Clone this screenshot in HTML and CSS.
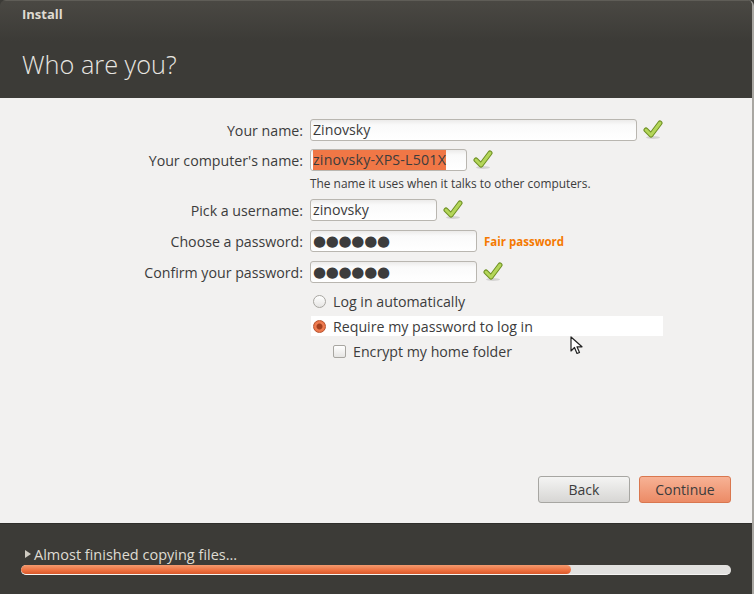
FILE: index.html
```html
<!doctype html>
<html>
<head>
  <meta charset="utf-8">
  <link rel="stylesheet" href="styles.css">
</head>
<body>
<div class="window">
  <div class="header">
    <div class="win_title">Install</div>
    <h1 class="page_title">Who are you?</h1>
  </div>

  <div class="content">
    <div class="row">
      <span class="label">Your name:</span>
      <div class="field_wrap">
        <div class="field w_name">Zinovsky</div>
        <svg class="check" width="20" height="20" viewBox="0 0 20 20"><ellipse cx="10" cy="17.5" rx="7" ry="1.5" fill="rgba(0,0,0,0.12)"/><path d="M3 10 L8 15 L17 3" fill="none" stroke="#6d8f22" stroke-width="5" stroke-linecap="round" stroke-linejoin="round"/><path d="M3 10 L8 15 L17 3" fill="none" stroke="#b4d65a" stroke-width="3" stroke-linecap="round" stroke-linejoin="round"/></svg>
      </div>
    </div>

    <div class="row row_tight">
      <span class="label">Your computer's name:</span>
      <div class="field_wrap">
        <div class="field w_host"><span class="selected">zinovsky-XPS-L501X</span></div>
        <svg class="check" width="20" height="20" viewBox="0 0 20 20"><ellipse cx="10" cy="17.5" rx="7" ry="1.5" fill="rgba(0,0,0,0.12)"/><path d="M3 10 L8 15 L17 3" fill="none" stroke="#6d8f22" stroke-width="5" stroke-linecap="round" stroke-linejoin="round"/><path d="M3 10 L8 15 L17 3" fill="none" stroke="#b4d65a" stroke-width="3" stroke-linecap="round" stroke-linejoin="round"/></svg>
      </div>
    </div>
    <div class="row hint_row">
      <span></span>
      <span class="hint">The name it uses when it talks to other computers.</span>
    </div>

    <div class="row">
      <span class="label">Pick a username:</span>
      <div class="field_wrap">
        <div class="field w_user">zinovsky</div>
        <svg class="check" width="20" height="20" viewBox="0 0 20 20"><ellipse cx="10" cy="17.5" rx="7" ry="1.5" fill="rgba(0,0,0,0.12)"/><path d="M3 10 L8 15 L17 3" fill="none" stroke="#6d8f22" stroke-width="5" stroke-linecap="round" stroke-linejoin="round"/><path d="M3 10 L8 15 L17 3" fill="none" stroke="#b4d65a" stroke-width="3" stroke-linecap="round" stroke-linejoin="round"/></svg>
      </div>
    </div>

    <div class="row">
      <span class="label">Choose a password:</span>
      <div class="field_wrap">
        <div class="field w_pass"><span class="dots">●●●●●●</span></div>
        <span class="strength">Fair password</span>
      </div>
    </div>

    <div class="row">
      <span class="label">Confirm your password:</span>
      <div class="field_wrap">
        <div class="field w_pass"><span class="dots">●●●●●●</span></div>
        <svg class="check" width="20" height="20" viewBox="0 0 20 20"><ellipse cx="10" cy="17.5" rx="7" ry="1.5" fill="rgba(0,0,0,0.12)"/><path d="M3 10 L8 15 L17 3" fill="none" stroke="#6d8f22" stroke-width="5" stroke-linecap="round" stroke-linejoin="round"/><path d="M3 10 L8 15 L17 3" fill="none" stroke="#b4d65a" stroke-width="3" stroke-linecap="round" stroke-linejoin="round"/></svg>
      </div>
    </div>

    <div class="options">
      <div class="opt"><span class="radio"></span>Log in automatically</div>
      <div class="opt opt_hover"><span class="radio radio_on"></span>Require my password to log in</div>
      <div class="opt opt_sub"><span class="checkbox"></span>Encrypt my home folder</div>
    </div>

    <div class="buttons">
      <div class="btn">Back</div>
      <div class="btn btn_primary">Continue</div>
    </div>

    <svg class="pointer" width="14" height="20" viewBox="0 0 14 20"><path d="M1 1 L1 15 L4.5 11.5 L7 17.5 L9.5 16.5 L7 10.8 L12 10.8 Z" fill="#fff" stroke="#222" stroke-width="1.2" stroke-linejoin="round"/></svg>
  </div>

  <div class="footer">
    <div class="status"><span class="arrow"></span>Almost finished copying files...</div>
    <div class="progress">
      <div class="progress_fill" style="width: 77.4%"></div>
    </div>
  </div>
</div>
</body>
</html>
```

FILE: styles.css
```css
html, body {
  margin: 0;
  padding: 0;
  background: #3c3b37;
}
body {
  font-family: "Open Sans", "Noto Sans", sans-serif;
  font-size: 14.2px;
  color: #3c3c3c;
}

.window {
  width: 752px;
  height: 594px;
  display: flex;
  flex-direction: column;
  border-right: 2px solid #a9a7a2;
  border-radius: 6px 6px 0 0;
  overflow: hidden;
}

.header {
  height: 98px;
  background: linear-gradient(#4a4843 0px, #3c3b37 40px);
  border-top: 1px solid #5f5d57;
  box-sizing: border-box;
  padding: 4px 22px 0;
}
.win_title {
  color: #dfdbd2;
  font-weight: bold;
  font-size: 13px;
  height: 18px;
}
.page_title {
  margin: 26px 0 0;
  color: #e8e6e1;
  font-weight: 300;
  font-size: 25.3px;
  line-height: 30px;
}

.content {
  position: relative;
  flex: 1;
  background: #f2f1f0;
  display: flex;
  flex-direction: column;
  padding: 21px 0 20px;
  box-sizing: border-box;
}

.row {
  display: grid;
  grid-template-columns: 303px 1fr;
  column-gap: 7px;
  align-items: center;
  margin-bottom: 9px;
}
.row:first-child {
  margin-bottom: 8px;
}
.row_tight {
  margin-bottom: 4px;
}
.hint_row {
  height: 16px;
  margin-bottom: 8px;
}
.label {
  text-align: right;
}
.hint {
  font-size: 11.9px;
}

.field_wrap {
  display: flex;
  align-items: center;
}
.field {
  height: 22px;
  box-sizing: border-box;
  border: 1px solid #b9b6b0;
  border-radius: 3px;
  background: linear-gradient(#ecebea 0px, #fafafa 5px, #ffffff 100%);
  padding: 0 2px;
  line-height: 20px;
  color: #3c3c3c;
  white-space: nowrap;
  overflow: hidden;
}
.w_name { width: 327px; }
.w_host { width: 157px; }
.w_user { width: 127px; }
.w_pass { width: 167px; }

.selected {
  background: #f07746;
  color: #3c3c3c;
  padding: 1px 0;
  letter-spacing: 0.2px;
}
.dots {
  font-family: "DejaVu Sans", sans-serif;
  font-size: 15px;
  letter-spacing: -0.3px;
  color: #3c3c3c;
}
.check {
  margin-left: 6px;
}
.strength {
  margin-left: 7px;
  color: #f57900;
  font-weight: bold;
  font-size: 11.5px;
}

.options {
  margin-left: 311px;
  margin-top: -1px;
  width: 352px;
  display: flex;
  flex-direction: column;
  gap: 5px;
}
.opt {
  height: 20px;
  display: flex;
  align-items: center;
  padding-left: 2px;
}
.opt_hover {
  background: #ffffff;
}
.opt_sub {
  padding-left: 22px;
}
.radio {
  width: 13px;
  height: 13px;
  box-sizing: border-box;
  border-radius: 50%;
  border: 1px solid #a8a6a1;
  background: linear-gradient(#ffffff, #e6e5e3);
  margin-right: 7px;
}
.radio_on {
  border-color: #b8532d;
  background: radial-gradient(circle, #a3401f 0px, #a3401f 2.5px, #ef7d52 3.5px, #e66b40 100%);
}
.checkbox {
  width: 13px;
  height: 13px;
  box-sizing: border-box;
  border-radius: 2px;
  border: 1px solid #a8a6a1;
  background: linear-gradient(#ffffff, #e6e5e3);
  margin-right: 7px;
}

.buttons {
  margin-top: auto;
  display: flex;
  justify-content: flex-end;
  gap: 9px;
  padding-right: 21px;
}
.btn {
  width: 92px;
  height: 27px;
  box-sizing: border-box;
  border: 1px solid #a7a6a2;
  border-radius: 3px;
  background: linear-gradient(#f4f4f3, #d7d6d4);
  text-align: center;
  line-height: 25px;
  font-size: 14px;
  color: #3c3c3c;
}
.btn_primary {
  border-color: #d9774f;
  background: linear-gradient(#f7b295, #ec8b66);
}

.pointer {
  position: absolute;
  left: 570px;
  top: 238px;
}

.footer {
  height: 71px;
  background: #3c3b37;
  border-top: 1px solid #2f2e2b;
  box-sizing: border-box;
  padding: 21px 21px 0;
}
.status {
  color: #dfdbd2;
  display: flex;
  align-items: center;
  height: 18px;
  font-size: 14.5px;
}
.arrow {
  width: 0;
  height: 0;
  border-top: 4.5px solid transparent;
  border-bottom: 4.5px solid transparent;
  border-left: 6px solid #cfcbc2;
  margin: 0 3px 0 4px;
}
.progress {
  margin-top: 2px;
  height: 10px;
  box-sizing: border-box;
  border-radius: 5px;
  background: #e2e1df;
  border-bottom: 1px solid #f6f5f3;
  overflow: hidden;
}
.progress_fill {
  height: 100%;
  border-radius: 5px;
  background: linear-gradient(#f39a6f, #ee703f 60%, #d9592b);
}
```
